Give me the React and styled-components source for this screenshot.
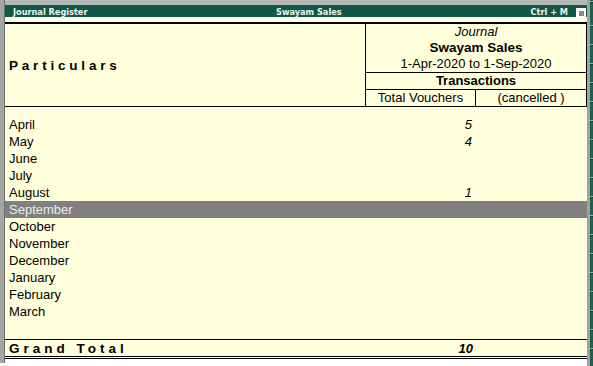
import React from "react";
import styled, { createGlobalStyle } from "styled-components";

const GlobalStyle = createGlobalStyle`
  html, body {
    margin: 0;
    padding: 0;
    background: #ffffff;
  }
  body {
    font-family: "Liberation Sans", Arial, sans-serif;
    color: #000;
  }
`;

const Screen = styled.div`
  display: flex;
  width: 593px;
  height: 366px;
  overflow: hidden;
  background: #ffffff;
`;

const LeftEdge = styled.div`
  width: 4px;
  height: 363px;
  background: #a4a6a4;
  border-right: 1px solid #6f716f;
`;

const Main = styled.div`
  width: 582px;
  display: flex;
  flex-direction: column;
`;

const TopStrip = styled.div`
  height: 5px;
  background: #b4b8b4;
`;

const TitleBar = styled.div`
  height: 12px;
  display: grid;
  grid-template-columns: 263px 1fr auto;
  align-items: center;
  padding: 0 1px 0 8px;
  background: #11584a;
  color: #eef3ee;
  font-family: "DejaVu Sans", Verdana, sans-serif;
  font-weight: bold;
  font-size: 8.2px;
  white-space: nowrap;
`;

const TitleRight = styled.div`
  display: flex;
  align-items: center;
  gap: 8px;
`;

const WinBox = styled.span`
  width: 10px;
  height: 10px;
  margin-top: 3px;
  background: #ffffff;
  display: flex;
  align-items: center;
  justify-content: center;

  &::after {
    content: "";
    width: 5px;
    height: 5px;
    background: #8a8a8a;
  }
`;

const Panel = styled.div`
  background: #ffffdc;
  padding-top: 5px;
  display: flex;
  flex-direction: column;
`;

const Header = styled.div`
  display: grid;
  grid-template-columns: 360px 222px;
  border-top: 2px solid #000;
  border-bottom: 1px solid #000;
  height: 82px;
`;

const SpacedLabel = styled.div`
  font-weight: bold;
  font-size: 13.5px;
  letter-spacing: ${(p) => p.$spacing || "3.8px"};
  padding-left: 4px;
  display: flex;
  align-items: center;
`;

const ColumnBox = styled.div`
  border-left: 1px solid #000;
  border-right: 1px solid #000;
  display: flex;
  flex-direction: column;
  font-size: 13px;
  text-align: center;
`;

const TitleBlock = styled.div`
  height: 48px;
  border-bottom: 1px solid #000;
  display: flex;
  flex-direction: column;
`;

const HeadLine = styled.div`
  height: 16px;
  line-height: 16px;
  font-style: ${(p) => (p.$italic ? "italic" : "normal")};
  font-weight: ${(p) => (p.$bold ? "bold" : "normal")};
  font-size: ${(p) => p.$size || "13px"};
`;

const SubHead = styled.div`
  height: 16px;
  line-height: 16px;
  font-weight: bold;
  border-bottom: 1px solid #000;
`;

const SubCols = styled.div`
  height: 16px;
  display: grid;
  grid-template-columns: 110px 1fr;
  line-height: 16px;

  & > div:first-child {
    border-right: 1px solid #000;
  }
`;

const Body = styled.div`
  height: 232px;
  padding-top: 9px;
  box-sizing: border-box;
`;

const Row = styled.div`
  display: grid;
  grid-template-columns: 360px 110px 112px;
  height: 17px;
  align-items: center;
  font-size: 13px;
  background: ${(p) => (p.$active ? "#808080" : "transparent")};
  color: ${(p) => (p.$active ? "#ececec" : "#000")};
`;

const Name = styled.div`
  padding-left: 4px;
`;

const Count = styled.div`
  text-align: right;
  padding-right: 3px;
  font-style: italic;
  font-weight: ${(p) => (p.$bold ? "bold" : "normal")};
`;

const TotalRow = styled.div`
  display: grid;
  grid-template-columns: 360px 111px 111px;
  align-items: center;
  height: 16px;
  border-top: 1px solid #000;
  border-bottom: 3px double #000;
  font-size: 13px;
`;

const RightRail = styled.div`
  width: 3px;
  height: 366px;
  border-left: 3px solid #a0a2a0;
  background: repeating-linear-gradient(
    to bottom,
    #1f5f50 0px,
    #1f5f50 17px,
    #8fb0a6 17px,
    #8fb0a6 18px,
    #0d3f34 18px,
    #0d3f34 19px
  );
  background-position: 0 8px;
`;

const months = [
  { name: "April", count: 5 },
  { name: "May", count: 4 },
  { name: "June" },
  { name: "July" },
  { name: "August", count: 1 },
  { name: "September", active: true },
  { name: "October" },
  { name: "November" },
  { name: "December" },
  { name: "January" },
  { name: "February" },
  { name: "March" },
];

export default function App() {
  return (
    <>
      <GlobalStyle />
      <Screen>
        <LeftEdge />
        <Main>
          <TopStrip />
          <TitleBar>
            <span>Journal Register</span>
            <span>Swayam Sales</span>
            <TitleRight>
              <span>Ctrl + M</span>
              <WinBox />
            </TitleRight>
          </TitleBar>
          <Panel>
            <Header>
              <SpacedLabel>Particulars</SpacedLabel>
              <ColumnBox>
                <TitleBlock>
                  <HeadLine $italic>Journal</HeadLine>
                  <HeadLine $bold $size="13.5px">
                    Swayam Sales
                  </HeadLine>
                  <HeadLine>1-Apr-2020 to 1-Sep-2020</HeadLine>
                </TitleBlock>
                <SubHead>Transactions</SubHead>
                <SubCols>
                  <div>Total Vouchers</div>
                  <div>(cancelled )</div>
                </SubCols>
              </ColumnBox>
            </Header>
            <Body>
              {months.map((m) => (
                <Row key={m.name} $active={m.active}>
                  <Name>{m.name}</Name>
                  <Count>{m.count}</Count>
                  <div />
                </Row>
              ))}
            </Body>
            <TotalRow>
              <SpacedLabel $spacing="4px">Grand Total</SpacedLabel>
              <Count $bold>10</Count>
              <div />
            </TotalRow>
          </Panel>
        </Main>
        <RightRail />
      </Screen>
    </>
  );
}
